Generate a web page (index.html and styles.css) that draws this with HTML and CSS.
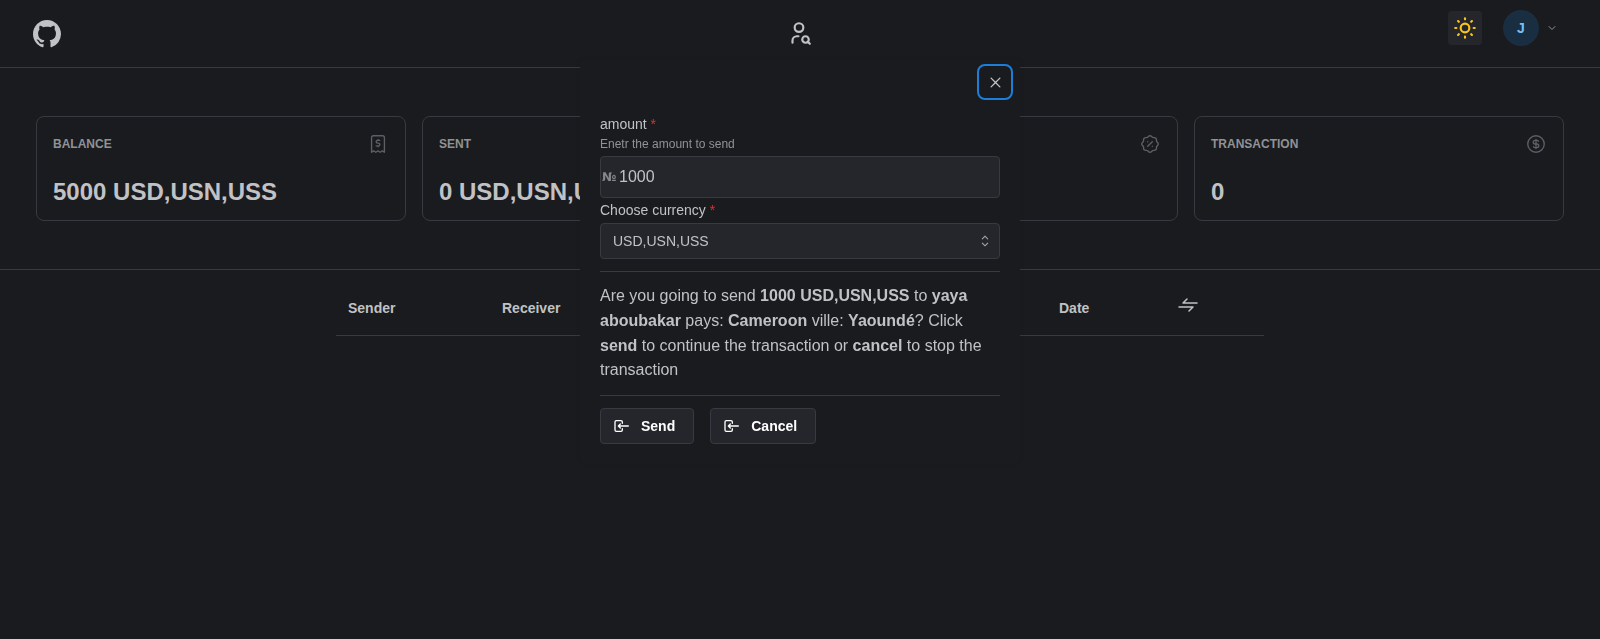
FILE: index.html
```html
<!DOCTYPE html>
<html lang="en">
<head>
<meta charset="utf-8">
<title>Wallet</title>
<link rel="stylesheet" href="styles.css">
</head>
<body>
<header class="topbar">
  <a class="logo" href="#" aria-label="GitHub">
    <svg class="logo-icon" viewBox="0 0 16 16"><path fill="currentColor" d="M8 0C3.58 0 0 3.58 0 8c0 3.54 2.29 6.53 5.47 7.59.4.07.55-.17.55-.38 0-.19-.01-.82-.01-1.49-2.01.37-2.53-.49-2.69-.94-.09-.23-.48-.94-.82-1.13-.28-.15-.68-.52-.01-.53.63-.01 1.08.58 1.23.82.72 1.21 1.87.87 2.33.66.07-.52.28-.87.51-1.07-1.78-.2-3.64-.89-3.64-3.95 0-.87.31-1.59.82-2.15-.08-.2-.36-1.02.08-2.12 0 0 .67-.21 2.2.82.64-.18 1.32-.27 2-.27.68 0 1.36.09 2 .27 1.53-1.04 2.2-.82 2.2-.82.44 1.1.16 1.92.08 2.12.51.56.82 1.27.82 2.15 0 3.07-1.87 3.75-3.65 3.95.29.25.54.73.54 1.48 0 1.07-.01 1.93-.01 2.2 0 .21.15.46.55.38A8.013 8.013 0 0016 8c0-4.42-3.58-8-8-8z"/></svg>
  </a>
  <div class="center-nav">
    <svg class="nav-icon" viewBox="0 0 24 24"><path d="M8 7a4 4 0 1 0 8 0a4 4 0 0 0 -8 0M6 21v-2a4 4 0 0 1 4 -4h1.5M18 18m-3 0a3 3 0 1 0 6 0a3 3 0 1 0 -6 0M20.2 20.2l1.8 1.8"/></svg>
  </div>
  <div class="user-area">
    <button class="theme-btn" aria-label="Theme">
      <svg class="sun-icon" viewBox="0 0 24 24"><path d="M8 12a4 4 0 1 0 8 0a4 4 0 1 0 -8 0M3 12h1m8 -9v1m8 8h1m-9 8v1m-6.4 -15.4l.7 .7m12.1 -.7l-.7 .7m0 11.4l.7 .7m-12.1 -.7l-.7 .7"/></svg>
    </button>
    <div class="avatar">J</div>
    <svg class="chevron" viewBox="0 0 24 24"><path d="M6 9l6 6l6 -6"/></svg>
  </div>
</header>

<section class="stats">
  <article class="card">
    <div class="card-head"><span class="card-title">BALANCE</span>
      <svg class="card-icon" viewBox="0 0 24 24"><path d="M5 21v-16a2 2 0 0 1 2 -2h10a2 2 0 0 1 2 2v16l-2.3 -1.5l-2.3 1.5l-2.4 -1.5l-2.4 1.5l-2.3 -1.5l-2.3 1.5M14 8h-2.5a1.5 1.5 0 0 0 0 3h1a1.5 1.5 0 0 1 0 3h-2.5M12 7v1m0 6v1"/></svg>
    </div>
    <div class="card-value">5000 USD,USN,USS</div>
  </article>
  <article class="card">
    <div class="card-head"><span class="card-title">SENT</span></div>
    <div class="card-value">0 USD,USN,USS</div>
  </article>
  <article class="card">
    <div class="card-head card-head-end">
      <svg class="card-icon" viewBox="0 0 24 24"><path d="M5 7.2a2.2 2.2 0 0 1 2.2 -2.2h1a2.2 2.2 0 0 0 1.55 -.64l.7 -.7a2.2 2.2 0 0 1 3.12 0l.7 .7c.412 .41 .97 .64 1.55 .64h1a2.2 2.2 0 0 1 2.2 2.2v1c0 .58 .23 1.138 .64 1.55l.7 .7a2.2 2.2 0 0 1 0 3.12l-.7 .7a2.2 2.2 0 0 0 -.64 1.55v1a2.2 2.2 0 0 1 -2.2 2.2h-1a2.2 2.2 0 0 0 -1.55 .64l-.7 .7a2.2 2.2 0 0 1 -3.12 0l-.7 -.7a2.2 2.2 0 0 0 -1.55 -.64h-1a2.2 2.2 0 0 1 -2.2 -2.2v-1a2.2 2.2 0 0 0 -.64 -1.55l-.7 -.7a2.2 2.2 0 0 1 0 -3.12l.7 -.7a2.2 2.2 0 0 0 .64 -1.55v-1M9.5 14.5l5 -5M9.5 9.5v.01M14.5 14.5v.01"/></svg>
    </div>
  </article>
  <article class="card">
    <div class="card-head"><span class="card-title">TRANSACTION</span>
      <svg class="card-icon" viewBox="0 0 24 24"><path d="M3 12a9 9 0 1 0 18 0a9 9 0 1 0 -18 0M14.8 9a2 2 0 0 0 -1.8 -1h-2a2 2 0 1 0 0 4h2a2 2 0 1 1 0 4h-2a2 2 0 0 1 -1.8 -1M12 7v10"/></svg>
    </div>
    <div class="card-value">0</div>
  </article>
</section>

<section class="history">
  <table class="tx-table">
    <thead>
      <tr>
        <th class="col-sender">Sender</th>
        <th class="col-receiver">Receiver</th>
        <th class="col-amount"></th>
        <th class="col-status"></th>
        <th class="col-date">Date</th>
        <th class="col-action">
          <svg class="swap-icon" viewBox="0 0 24 24"><path d="M21 10h-14l4 -4M3 14h14l-4 4"/></svg>
        </th>
      </tr>
    </thead>
  </table>
</section>

<div class="modal" role="dialog">
  <div class="modal-head">
    <button class="close-btn" aria-label="Close">
      <svg class="close-icon" viewBox="0 0 15 15"><path fill="currentColor" fill-rule="evenodd" clip-rule="evenodd" d="M11.78 4.03c.22-.22.22-.58 0-.81-.22-.22-.58-.22-.81 0L7.5 6.69 4.03 3.22c-.22-.22-.58-.22-.81 0-.22.22-.22.58 0 .81L6.69 7.5 3.22 10.97c-.22.22-.22.58 0 .81.22.22.58.22.81 0L7.5 8.31l3.47 3.47c.22.22.58.22.81 0 .22-.22.22-.58 0-.81L8.31 7.5l3.47-3.47z"/></svg>
    </button>
  </div>
  <div class="modal-body">
    <label class="field-label">amount <span class="req">*</span></label>
    <p class="field-desc">Enetr the amount to send</p>
    <div class="amount-input"><span class="amount-prefix">№</span><span class="amount-value">1000</span></div>
    <label class="field-label field-label-select">Choose currency <span class="req">*</span></label>
    <div class="select-input">
      <span>USD,USN,USS</span>
      <svg class="select-caret" viewBox="0 0 15 15"><path fill="currentColor" fill-rule="evenodd" clip-rule="evenodd" d="M4.93 5.43a.45.45 0 0 0 .64.64L7.5 4.14l1.93 1.93a.45.45 0 0 0 .64-.64L7.82 3.18a.45.45 0 0 0-.64 0L4.93 5.43zm5.14 4.14a.45.45 0 0 0-.64-.64L7.5 10.86 5.57 8.93a.45.45 0 0 0-.64.64l2.25 2.25c.18.18.46.18.64 0l2.25-2.25z"/></svg>
    </div>
    <hr class="rule rule-top">
    <p class="confirm">Are you going to send <b>1000 USD,USN,USS</b> to <b>yaya aboubakar</b> pays: <b>Cameroon</b> ville: <b>Yaoundé</b>? Click <b>send</b> to continue the transaction or <b>cancel</b> to stop the transaction</p>
    <hr class="rule rule-bottom">
    <div class="actions">
      <button class="action-btn">
        <svg class="btn-icon" viewBox="0 0 24 24"><path d="M14 8v-2a2 2 0 0 0 -2 -2h-7a2 2 0 0 0 -2 2v12a2 2 0 0 0 2 2h7a2 2 0 0 0 2 -2v-2M8 12h15M8 12l3 -3M8 12l3 3"/></svg>
        Send
      </button>
      <button class="action-btn">
        <svg class="btn-icon" viewBox="0 0 24 24"><path d="M14 8v-2a2 2 0 0 0 -2 -2h-7a2 2 0 0 0 -2 2v12a2 2 0 0 0 2 2h7a2 2 0 0 0 2 -2v-2M8 12h15M8 12l3 -3M8 12l3 3"/></svg>
        Cancel
      </button>
    </div>
  </div>
</div>
</body>
</html>
```
FILE: styles.css
```css
* { box-sizing: border-box; }
html, body { height: 100%; }
body {
  margin: 0;
  background: #1a1b1e;
  color: #c1c2c5;
  font-family: "Liberation Sans", Arial, sans-serif;
  font-size: 16px;
  overflow: hidden;
}
svg { display: block; fill: none; stroke: currentColor; stroke-width: 2; stroke-linecap: round; stroke-linejoin: round; }

.topbar {
  height: 68px;
  border-bottom: 1px solid #373a40;
  display: grid;
  grid-template-columns: 1fr auto 1fr;
  align-items: center;
  padding: 0 33px;
}
.logo { color: #c1c2c5; justify-self: start; }
.logo-icon { width: 28px; height: 28px; stroke: none; }
.nav-icon { width: 26px; height: 26px; margin: -2px 1px 0 -1px; }
.user-area {
  justify-self: end;
  align-self: start;
  margin: 10px 9px 0 0;
  display: flex;
  align-items: center;
}
.theme-btn {
  width: 34px;
  height: 34px;
  padding: 0;
  border: 0;
  border-radius: 4px;
  background: #25262b;
  display: flex;
  align-items: center;
  justify-content: center;
}
.sun-icon { width: 26px; height: 26px; color: #fcc419; }
.avatar {
  width: 36px;
  height: 36px;
  margin-left: 21px;
  border-radius: 50%;
  background: #1a2e42;
  color: #74c0fc;
  font-size: 14px;
  font-weight: 700;
  display: flex;
  align-items: center;
  justify-content: center;
}
.chevron { width: 12px; height: 12px; margin-left: 7px; color: #909296; }

.stats {
  padding: 48px 36px 48px;
  border-bottom: 1px solid #373a40;
  display: grid;
  grid-template-columns: repeat(4, 1fr);
  gap: 16px;
}
.card {
  height: 105px;
  padding: 16px;
  border: 1px solid #373a40;
  border-radius: 8px;
}
.card-head { display: flex; justify-content: space-between; align-items: center; height: 22px; }
.card-head-end { justify-content: flex-end; }
.card-title { font-size: 12px; font-weight: 700; color: #909296; }
.card-icon { width: 22px; height: 22px; color: #5c5f66; stroke-width: 1.5; }
.card-value { margin-top: 20px; font-size: 24px; font-weight: 700; line-height: 34px; color: #c1c2c5; }

.history { display: flex; justify-content: center; }
.tx-table { width: 928px; table-layout: fixed; border-collapse: collapse; }
.tx-table th {
  height: 65px;
  padding: 12px 12px 0;
  text-align: left;
  font-size: 14px;
  font-weight: 700;
  color: #c1c2c5;
  border-bottom: 1px solid #373a40;
}
.col-sender, .col-receiver { width: 154px; }
.col-amount { width: 200px; }
.col-status { width: 203px; }
.col-date { width: 119px; }
.col-action { width: 98px; }
.swap-icon { width: 24px; height: 24px; margin: -6px 0 0 -2px; stroke-width: 1.5; }

.modal {
  position: fixed;
  top: 60px;
  left: 580px;
  width: 440px;
  height: 403px;
  background: #1a1b1e;
  border-radius: 4px;
  box-shadow: 0 0 4px rgba(0, 0, 0, .08);
  will-change: transform;
}
.modal-head { display: flex; justify-content: flex-end; padding: 8px 11px 0 0; height: 54px; }
.close-btn {
  width: 28px;
  height: 28px;
  padding: 0;
  border: 0;
  border-radius: 4px;
  background: transparent;
  color: #c1c2c5;
  outline: 2px solid #1c7ed6;
  outline-offset: 2px;
  display: flex;
  align-items: center;
  justify-content: center;
}
.close-icon { width: 17px; height: 17px; stroke: none; }
.modal-body { padding: 0 20px; }
.field-label { display: block; font-size: 14px; line-height: 21.7px; color: #c1c2c5; }
.field-label-select { height: 25px; padding-top: 2px; }
.req { color: #e03131; }
.field-desc { margin: 1px 0 4.6px; font-size: 12px; line-height: 14.4px; color: #909296; }
.amount-input {
  height: 42px;
  border: 1px solid #373a40;
  border-radius: 4px;
  background: #25262b;
  display: flex;
  align-items: center;
  padding-left: 1px;
}
.amount-prefix { font-size: 12px; font-weight: 700; color: #85878b; width: 17px; font-family: "DejaVu Sans", sans-serif; }
.amount-value { font-size: 16px; color: #c1c2c5; }
.select-input {
  height: 36px;
  padding: 0 12px;
  border: 1px solid #373a40;
  border-radius: 4px;
  background: #25262b;
  font-size: 14px;
  color: #c1c2c5;
  display: flex;
  align-items: center;
  justify-content: space-between;
}
.select-caret { width: 18px; height: 18px; margin-right: -7px; stroke: none; color: #a0a2a6; }
.rule { margin: 0; border: 0; border-top: 1px solid #373a40; }
.rule-top { margin-top: 12px; }
.rule-bottom { margin-top: 11.7px; }
.confirm { margin: 12.3px 0 0; font-size: 16px; line-height: 24.8px; color: #c1c2c5; }
.actions { display: flex; gap: 16px; margin-top: 12px; }
.action-btn {
  height: 36px;
  padding: 0 18px 0 12px;
  border: 1px solid #373a40;
  border-radius: 4px;
  background: #25262b;
  color: #fff;
  font-family: inherit;
  font-size: 14px;
  font-weight: 700;
  display: flex;
  align-items: center;
  gap: 12px;
}
.btn-icon { width: 16px; height: 16px; stroke-width: 2; }
```
